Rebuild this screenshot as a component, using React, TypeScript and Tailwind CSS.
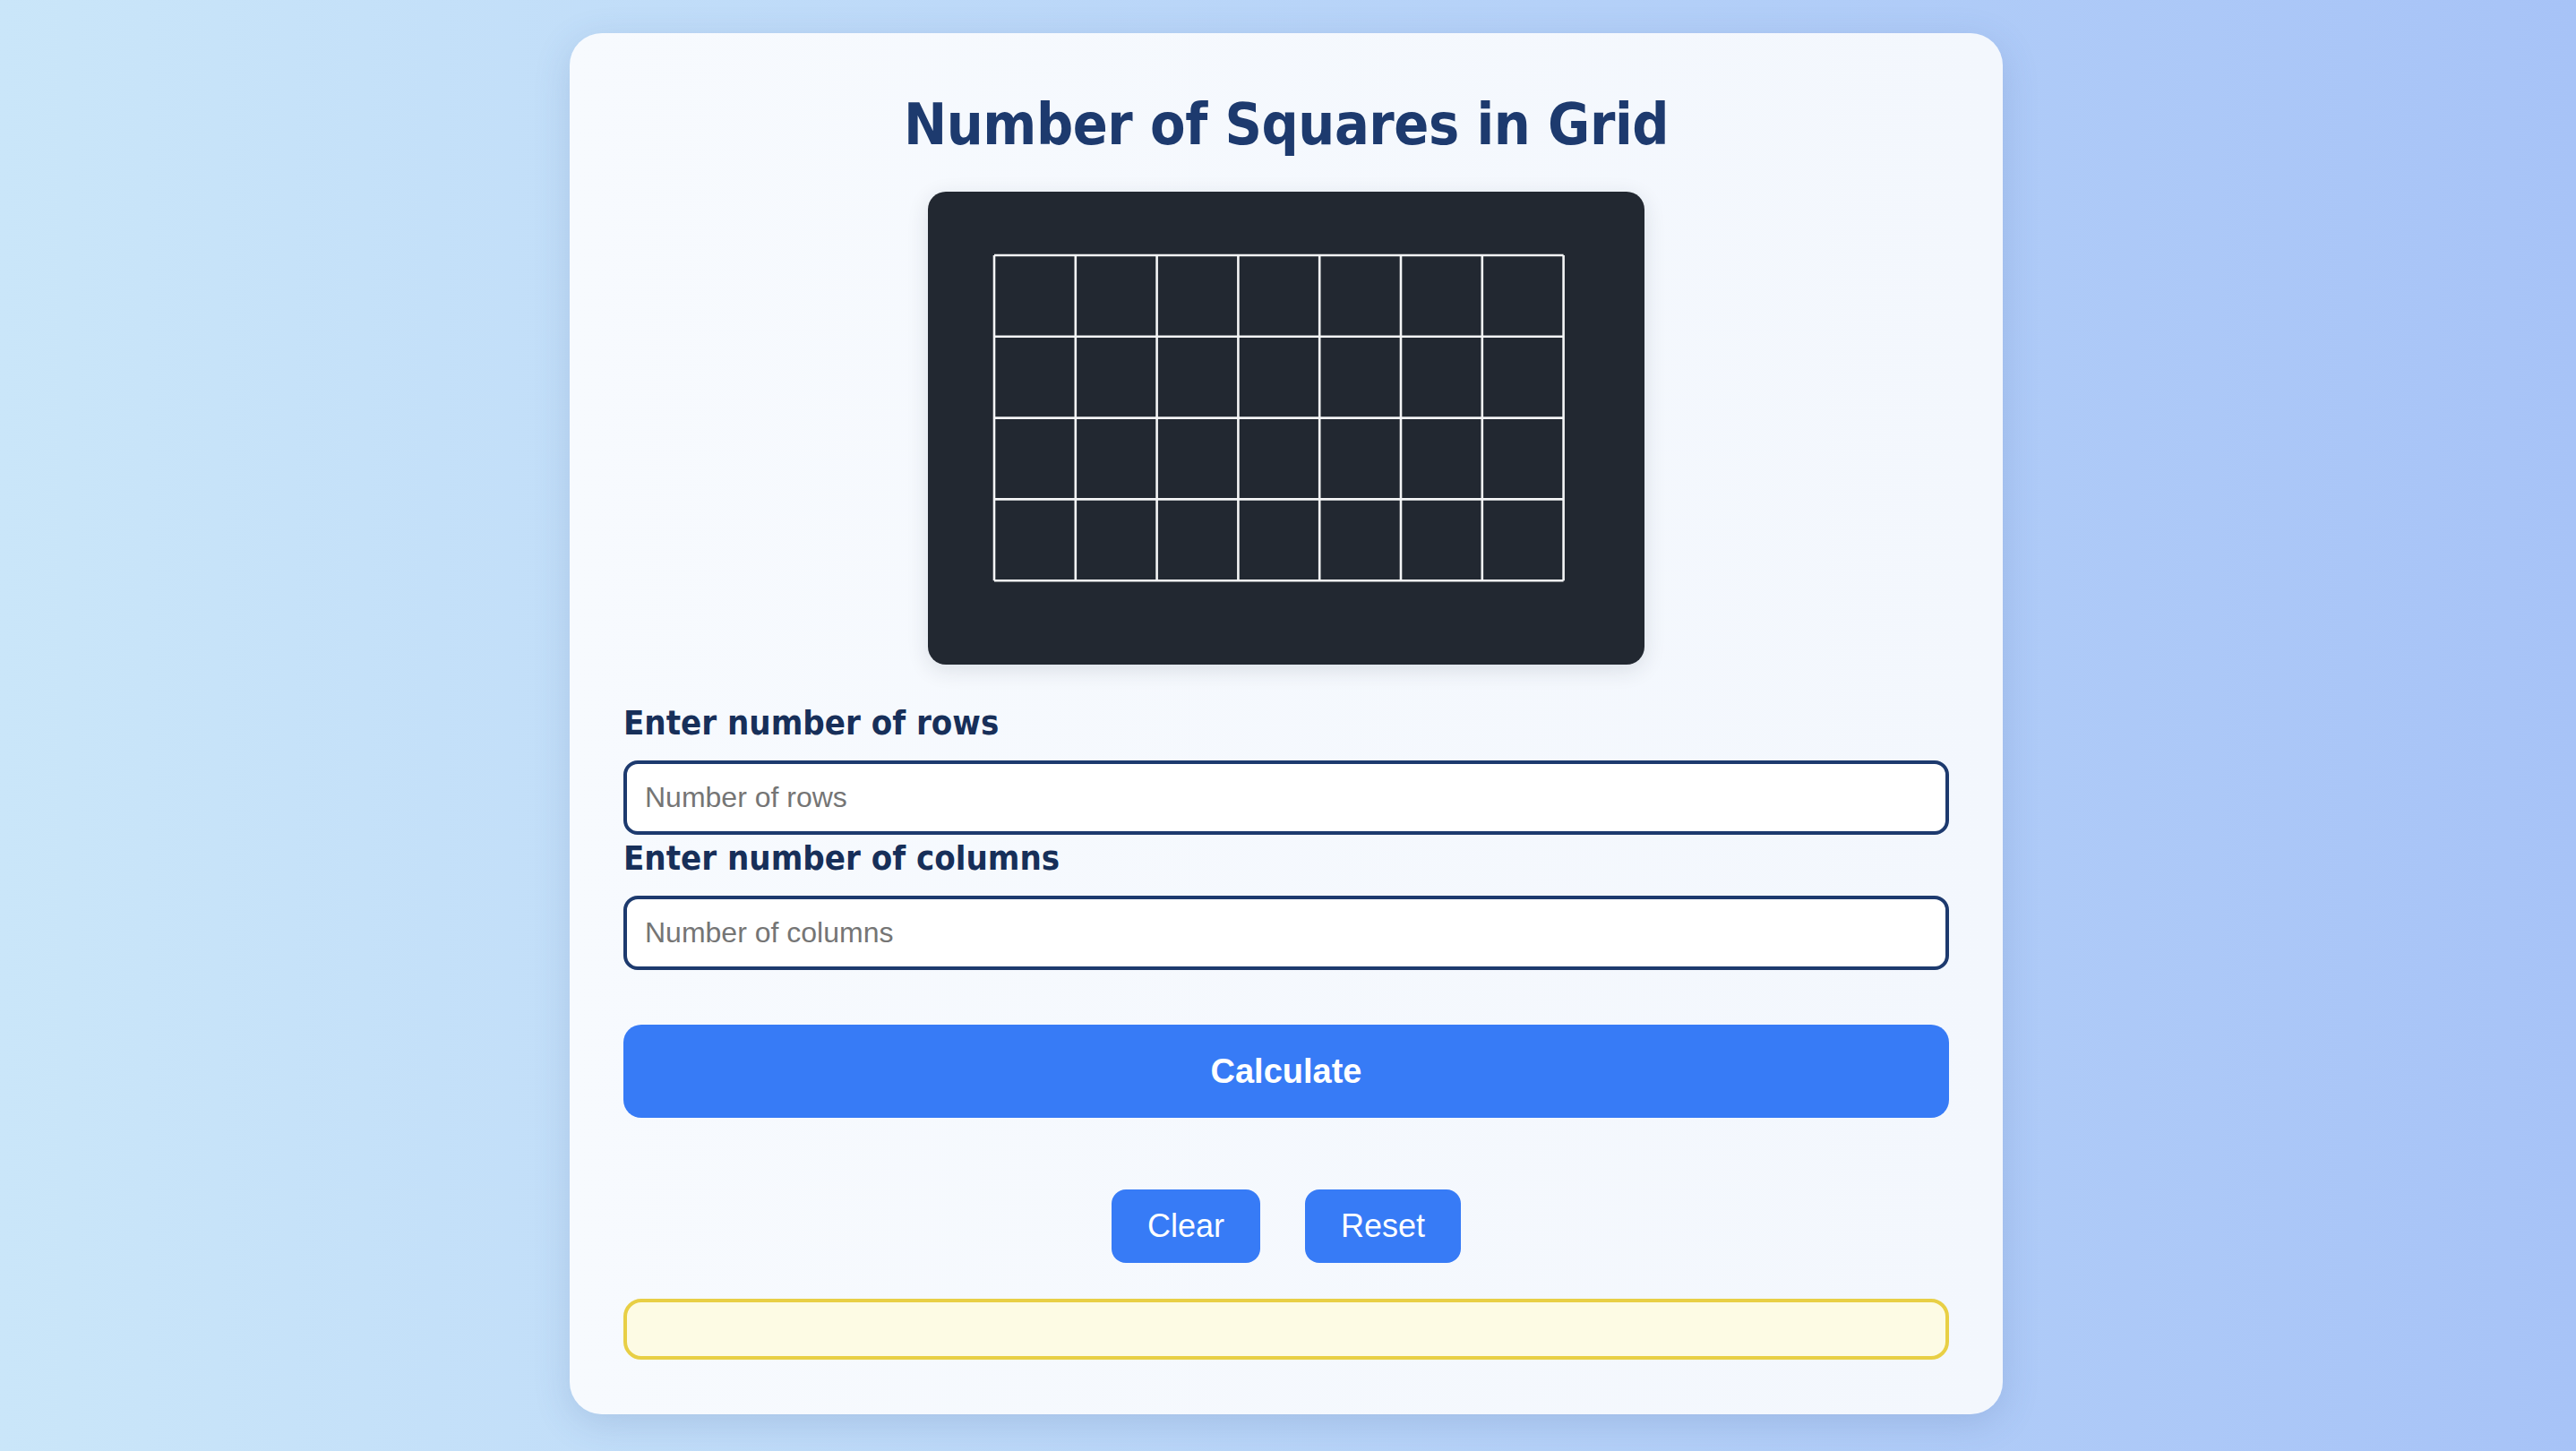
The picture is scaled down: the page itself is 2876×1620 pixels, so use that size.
import type { FC } from "react";

const COLS = 7;
const ROWS = 4;
const CELL = 90.8;
const OX = 74;
const OY = 71;

const GridPreview: FC = () => {
  const w = COLS * CELL;
  const h = ROWS * CELL;
  return (
    <svg width={800} height={528} viewBox="0 0 800 528" className="block">
      {Array.from({ length: COLS + 1 }, (_, i) => (
        <line key={`v${i}`} x1={OX + i * CELL} y1={OY} x2={OX + i * CELL} y2={OY + h} stroke="#f4f5f6" strokeWidth={2.6} />
      ))}
      {Array.from({ length: ROWS + 1 }, (_, j) => (
        <line key={`h${j}`} x1={OX} y1={OY + j * CELL} x2={OX + w} y2={OY + j * CELL} stroke="#f4f5f6" strokeWidth={2.6} />
      ))}
    </svg>
  );
};

const App: FC = () => {
  return (
    <div className="flex min-h-screen justify-center bg-gradient-to-r from-[#cae6f9] to-[#a7c3f7] pt-[37px] pr-[4px] pb-[41px]">
      <div className="flex w-[1600px] flex-col rounded-[36px] bg-gradient-to-r from-[#f7fafe] to-[#f3f7fd] px-[60px] pt-[60px] pb-[60px] shadow-[0_10px_40px_rgba(60,90,150,0.18)]">
        {/* Заголовок */}
        <h1 className="mt-[4px] mb-[36px] text-center font-['DejaVu_Sans_Condensed','DejaVu_Sans',sans-serif] text-[64px] leading-[77px] font-bold tracking-[-0.4px] text-[#1d3a6e] [font-stretch:condensed]">
          Number of Squares in Grid
        </h1>

        {/* Превью сетки */}
        <div className="flex justify-center">
          <div className="h-[528px] w-[800px] overflow-hidden rounded-[20px] bg-[#222831] shadow-[0_6px_24px_rgba(30,40,60,0.12)]">
            <GridPreview />
          </div>
        </div>

        {/* Поля ввода */}
        <label className="mt-[42px] mb-[19px] font-['DejaVu_Sans_Condensed','DejaVu_Sans',sans-serif] text-[38px] leading-[46px] font-bold text-[#172f59] [font-stretch:condensed]">
          Enter number of rows
        </label>
        <input
          type="text"
          placeholder="Number of rows"
          className="mb-[3px] h-[83px] w-full rounded-[16px] border-4 border-[#1d3a6e] bg-white px-[20px] font-['Liberation_Sans',Arial,sans-serif] text-[32px] text-[#222] outline-none placeholder:text-[#757575]"
        />
        <label className="mb-[19px] font-['DejaVu_Sans_Condensed','DejaVu_Sans',sans-serif] text-[38px] leading-[46px] font-bold text-[#172f59] [font-stretch:condensed]">
          Enter number of columns
        </label>
        <input
          type="text"
          placeholder="Number of columns"
          className="h-[83px] w-full rounded-[16px] border-4 border-[#1d3a6e] bg-white px-[20px] font-['Liberation_Sans',Arial,sans-serif] text-[32px] text-[#222] outline-none placeholder:text-[#757575]"
        />

        {/* Кнопки */}
        <button className="mt-[61px] h-[104px] w-full rounded-[20px] bg-[#377bf6] font-['Liberation_Sans',Arial,sans-serif] text-[38px] font-bold text-white">
          Calculate
        </button>

        <div className="mt-[80px] flex justify-center gap-[50px]">
          <button className="h-[82px] rounded-[16px] bg-[#377bf6] px-[40px] font-['Liberation_Sans',Arial,sans-serif] text-[36px] text-white">
            Clear
          </button>
          <button className="h-[82px] rounded-[16px] bg-[#377bf6] px-[40px] font-['Liberation_Sans',Arial,sans-serif] text-[36px] text-white">
            Reset
          </button>
        </div>

        {/* Результат */}
        <div className="mt-[40px] h-[68px] w-full rounded-[20px] border-4 border-[#e8cf45] bg-[#fdfbe4]"></div>
      </div>
    </div>
  );
};

export default App;
